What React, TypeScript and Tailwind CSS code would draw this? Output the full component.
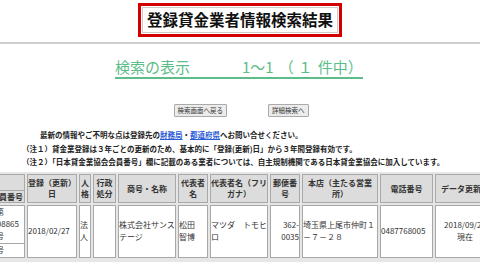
import React from 'react'

const jp = { fontFamily: '"Noto Sans CJK JP", "Noto Sans", sans-serif' }

export default function App() {
  const th = 'border border-[#a8a8a8] bg-[#dcdcdc] text-[#333] font-bold text-[8px] leading-[11px] text-center align-middle p-0'
  const td = 'border border-[#a8a8a8] bg-white text-[#333] text-[8px] leading-[12px] align-middle p-0'

  return (
    <div className="w-[480px] h-[270px] overflow-hidden bg-white relative" style={jp}>
      {/* title */}
      <div className="flex justify-center pt-[3px]">
        <div className="border-[3px] border-[#d40000] px-[1px] py-[1px]">
          <div className="border border-[#ccc] px-[4px] h-[26px] flex items-center text-[15.5px] font-bold text-[#111]">
            登録貸金業者情報検索結果
          </div>
        </div>
      </div>
      <div className="mt-[5px] h-[2px] bg-[#cfcfcf]" />

      {/* count */}
      <div className="flex mt-[14px] pl-[115px]">
        <div className="flex items-end text-[15px] leading-[18px] text-[#5cbd8a] border-b-2 border-[#5cbd8a] pb-[1px] w-[248px] whitespace-nowrap">
          <span>検索の表示</span>
          <span className="ml-[52px]">1～1</span>
          <span className="ml-[5px]">（</span>
          <span className="ml-[4px]">１</span>
          <span className="ml-[5px]">件中）</span>
        </div>
      </div>

      {/* buttons */}
      <div className="flex justify-center gap-[41px] mt-[25px] pl-[2px]">
        <button className="h-[13px] px-[3px] text-[6.5px] leading-[11px] text-[#333] bg-[#ececec] border border-[#aaa] rounded-[1px]">
          検索画面へ戻る
        </button>
        <button className="h-[13px] px-[3px] text-[6.5px] leading-[11px] text-[#333] bg-[#ececec] border border-[#aaa] rounded-[1px]">
          詳細検索へ
        </button>
      </div>

      {/* notes */}
      <div className="mt-[11px] text-[7.5px] leading-[13.5px] font-bold text-[#222] whitespace-nowrap">
        <div className="pl-[40px]">
          最新の情報やご不明な点は登録先の<span className="text-[#2a5bd7] underline">財務局</span>・<span className="text-[#2a5bd7] underline">都道府県</span>へお問い合せください。
        </div>
        <div className="pl-[22px]">（注１）貸金業登録は３年ごとの更新のため、基本的に「登録(更新)日」から３年間登録有効です。</div>
        <div className="pl-[22px]">（注２）「日本貸金業協会会員番号」欄に記載のある業者については、自主規制機関である日本貸金業協会に加入しています。</div>
      </div>

      {/* table */}
      <div className="mt-[3px] ml-[-22px] w-[540px] bg-[#e6e6e6] pb-[2px]">
        <table className="table-fixed border-separate border-spacing-[2px]">
          <thead>
            <tr className="h-[28px]">
              <th className={`${th} w-[45px] p-0`}>
                <div className="h-[16px] border-b border-[#a8a8a8]" />
                <div className="h-[11px] text-right pr-[1px] whitespace-nowrap overflow-hidden">会員番号</div>
              </th>
              <th className={`${th} w-[50px]`}>登録（更新）<br />日</th>
              <th className={`${th} w-[12px]`}>人<br />格</th>
              <th className={`${th} w-[23px]`}>行政<br />処分</th>
              <th className={`${th} w-[58px]`}>商号・名称</th>
              <th className={`${th} w-[30px]`}>代表者<br />名</th>
              <th className={`${th} w-[58px]`}>代表者名（フリ<br />ガナ）</th>
              <th className={`${th} w-[30px]`}>郵便番<br />号</th>
              <th className={`${th} w-[76px]`}>本店（主たる営業<br />所）</th>
              <th className={`${th} w-[53px]`}>電話番号</th>
              <th className={`${th} w-[60px] whitespace-nowrap`}>データ更新日</th>
            </tr>
          </thead>
          <tbody>
            <tr className="h-[52px]">
              <td className={`${td} p-0`}>
                <div className="h-[38px] border-b border-[#a8a8a8] flex flex-col justify-center whitespace-nowrap">
                  <div className="text-right pr-[20px]">第</div>
                  <div className="text-right pr-[5px]">0008865</div>
                  <div className="text-right pr-[20px]">号</div>
                </div>
                <div className="h-[13px] text-right pr-[20px]">号</div>
              </td>
              <td className={`${td} text-[8.5px] whitespace-nowrap`}>2018/02/27</td>
              <td className={td}>法<br />人</td>
              <td className={td}></td>
              <td className={td}>株式会社サンス<br />テージ</td>
              <td className={td}>松田<br />智博</td>
              <td className={`${td} whitespace-nowrap`}>マツダ　トモヒ<br />ロ</td>
              <td className={`${td} text-right text-[8.5px]`}>362-<br />0035</td>
              <td className={td}>埼玉県上尾市仲町１<br />－７－２８</td>
              <td className={`${td} text-[8.5px] whitespace-nowrap`}>0487768005</td>
              <td className={`${td} text-center text-[8.5px] whitespace-nowrap`}>2018/09/25<br />現在</td>
            </tr>
          </tbody>
        </table>
      </div>
    </div>
  )
}
